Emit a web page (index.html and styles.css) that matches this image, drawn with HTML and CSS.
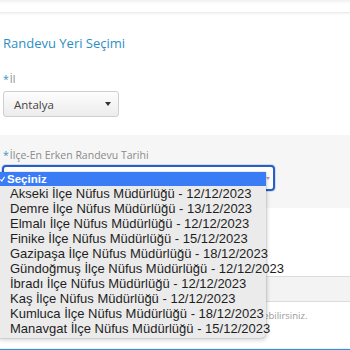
FILE: index.html
```html
<!DOCTYPE html>
<html lang="tr">
<head>
<meta charset="utf-8">
<link rel="stylesheet" href="styles.css">
</head>
<body>
<div class="topbar"></div>
<div class="page">
  <h2 class="title">Randevu Yeri Seçimi</h2>
  <div class="field">
    <div class="label"><span class="req">*</span>İl</div>
    <div class="select">
      <span class="value">Antalya</span>
      <span class="caret"></span>
    </div>
  </div>
  <div class="row-gray">
    <div class="label"><span class="req">*</span>İlçe-En Erken Randevu Tarihi</div>
    <div class="select focus">
      <span class="caret small"></span>
    </div>
  </div>
  <div class="spacer"></div>
  <div class="inputbar"></div>
  <p class="help">Randevu tarihinizi ilçeye göre seçebilirsiniz.</p>
  <div class="bottomline"></div>
</div>

<div class="popup">
  <div class="opt selected"><svg class="check" width="5" height="6" viewBox="0 0 5 6"><polyline points="0.4,3.4 1.8,5 4.6,0.8" fill="none" stroke="#fff" stroke-width="1.1"/></svg><span>Seçiniz</span></div>
  <div class="opt">Akseki İlçe Nüfus Müdürlüğü - 12/12/2023</div>
  <div class="opt">Demre İlçe Nüfus Müdürlüğü - 13/12/2023</div>
  <div class="opt">Elmalı İlçe Nüfus Müdürlüğü - 12/12/2023</div>
  <div class="opt">Finike İlçe Nüfus Müdürlüğü - 15/12/2023</div>
  <div class="opt">Gazipaşa İlçe Nüfus Müdürlüğü - 18/12/2023</div>
  <div class="opt">Gündoğmuş İlçe Nüfus Müdürlüğü - 12/12/2023</div>
  <div class="opt">İbradı İlçe Nüfus Müdürlüğü - 12/12/2023</div>
  <div class="opt">Kaş İlçe Nüfus Müdürlüğü - 12/12/2023</div>
  <div class="opt">Kumluca İlçe Nüfus Müdürlüğü - 18/12/2023</div>
  <div class="opt">Manavgat İlçe Nüfus Müdürlüğü - 15/12/2023</div>
</div>
</body>
</html>
```

FILE: styles.css
```css
html, body {
  margin: 0;
  padding: 0;
  background: #fff;
  font-family: "Open Sans", "Liberation Sans", sans-serif;
  width: 350px;
  height: 350px;
  overflow: hidden;
  position: relative;
}

.topbar {
  height: 12px;
  background: linear-gradient(#f1f1f1 0, #fff 4px, #fff 100%);
  border-bottom: 1px solid #ededed;
  box-shadow: 0 1px 2px rgba(0,0,0,0.06);
}

.page {
  display: flex;
  flex-direction: column;
}

.title {
  margin: 22px 0 0 3px;
  font-size: 13px;
  line-height: 16px;
  font-weight: 400;
  color: #2b8fc3;
}

.field {
  display: flex;
  flex-direction: column;
  padding-left: 3px;
  margin-top: 20px;
}

.label {
  font-size: 10.5px;
  line-height: 16px;
  color: #8a8a8a;
}

.req {
  color: #3c93c8;
  margin-right: 1px;
}

.select {
  margin-top: 4px;
  width: 97px;
  height: 24px;
  border: 1px solid #cfcfcf;
  border-radius: 3px;
  background: linear-gradient(#fdfdfd, #ececec);
  display: flex;
  align-items: center;
  justify-content: space-between;
  padding: 0 7px 0 10px;
  box-sizing: content-box;
}

.select .value {
  font-size: 11.5px;
  color: #444;
}

.caret {
  width: 0;
  height: 0;
  border-left: 3.5px solid transparent;
  border-right: 3.5px solid transparent;
  border-top: 4px solid #333;
}

.row-gray {
  margin-top: 18px;
  background: #f6f6f6;
  padding: 12px 0 17px 3px;
  display: flex;
  flex-direction: column;
}

.select.focus {
  margin-top: 2px;
  margin-left: -1px;
  width: 266px;
  height: 22px;
  padding: 0 3px 0 0;
  border: 2px solid #2a5ec4;
  border-radius: 4px;
  background: #fff;
  box-shadow: 0 0 0 1px rgba(80,140,230,0.25);
  justify-content: flex-end;
}

.caret.small {
  border-top-color: #aaa;
  border-left-width: 2px;
  border-right-width: 2px;
  border-top-width: 3px;
}

.spacer {
  height: 68px;
}

.inputbar {
  height: 24px;
  background: #f3f3f3;
  border-top: 1px solid #dcdcdc;
  border-bottom: 1px solid #dcdcdc;
}

.help {
  margin: 7px 0 0 117px;
  font-size: 9.5px;
  line-height: 13px;
  color: #9a9a9a;
}

.bottomline {
  margin-top: 26px;
  height: 2px;
  background: #3b8fd2;
  border-top: 1px solid #e8f1f8;
  box-shadow: 0 1px 0 #b9d8ef;
}

.popup {
  position: absolute;
  left: -4px;
  top: 172px;
  width: 270px;
  padding-bottom: 2px;
  background: #ebebeb;
  border-radius: 0 0 5px 5px;
  box-shadow: 1px 2px 4px rgba(0,0,0,0.18), 0 0 0 0.5px rgba(0,0,0,0.12);
  font-family: "Liberation Sans", Arial, sans-serif;
  font-size: 13px;
  color: #1e1e1e;
}

.opt {
  height: 15px;
  line-height: 15px;
  padding-left: 14px;
  white-space: nowrap;
}

.opt.selected {
  height: 14px;
  line-height: 14px;
  background: #3a7cf5;
  color: #fff;
  font-weight: 700;
  font-size: 11.5px;
  padding-left: 4px;
  display: flex;
  align-items: center;
}

.check {
  margin-right: 2px;
}
```
